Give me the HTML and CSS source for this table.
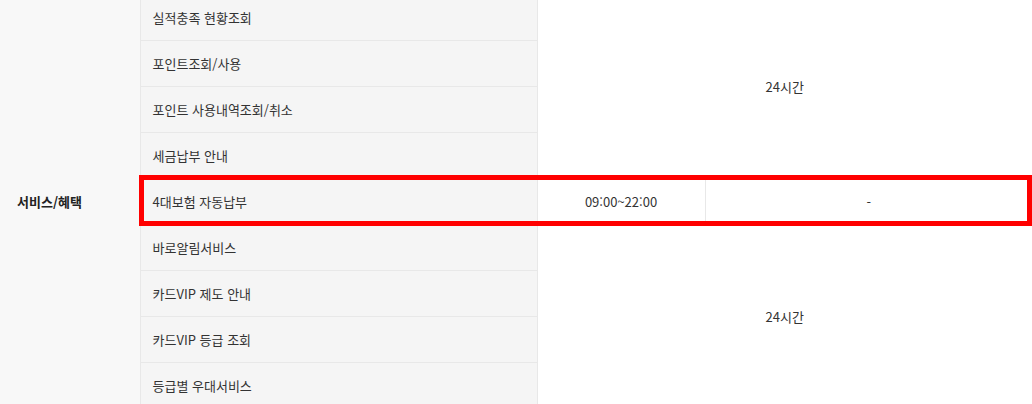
FILE: index.html
```html
<!DOCTYPE html>
<html lang="ko">
<head>
<meta charset="utf-8">
<link rel="stylesheet" href="styles.css">
</head>
<body>
<div class="page">
  <table class="svc">
    <colgroup>
      <col class="c1"><col class="c2"><col class="c3"><col class="c4">
    </colgroup>
    <tbody>
      <tr>
        <th rowspan="9" class="cat">서비스/혜택</th>
        <td class="item">실적충족 현황조회</td>
        <td class="time" colspan="2" rowspan="4">24시간</td>
      </tr>
      <tr><td class="item">포인트조회/사용</td></tr>
      <tr><td class="item">포인트 사용내역조회/취소</td></tr>
      <tr><td class="item">세금납부 안내</td></tr>
      <tr class="hl">
        <td class="item">4대보험 자동납부</td>
        <td class="time split">09:00~22:00</td>
        <td class="time last">-</td>
      </tr>
      <tr>
        <td class="item">바로알림서비스</td>
        <td class="time" colspan="2" rowspan="4">24시간</td>
      </tr>
      <tr><td class="item">카드VIP 제도 안내</td></tr>
      <tr><td class="item">카드VIP 등급 조회</td></tr>
      <tr><td class="item">등급별 우대서비스</td></tr>
    </tbody>
  </table>
  <div class="mark"></div>
</div>
</body>
</html>
```

FILE: styles.css
```css
html, body {
  margin: 0;
  padding: 0;
  background: #fff;
}
body {
  font-family: "Noto Sans CJK KR", "Malgun Gothic", sans-serif;
  font-size: 13px;
  color: #333;
  overflow: hidden;
}
.page {
  position: relative;
  width: 1032px;
  margin-top: -6px;
}
.svc {
  width: 1032px;
  table-layout: fixed;
  border-collapse: collapse;
}
.c1 { width: 140px; }
.c2 { width: 397px; }
.c3 { width: 168px; }
.c4 { width: 327px; }
.svc th, .svc td {
  padding: 0;
  height: 45px;
  border: 1px solid #e8e8e8;
  vertical-align: middle;
  font-weight: normal;
}
.cat {
  background: #f8f8f8;
  border-left: none !important;
  text-align: left;
  padding-left: 17px !important;
  font-weight: bold !important;
  color: #222;
}
.item {
  background: #f5f5f5;
  padding-left: 12px !important;
  text-align: left;
}
.time {
  background: #fff;
  text-align: center;
  border-right: none !important;
}
.time.split {
  border-right: 1px solid #e8e8e8 !important;
}
.mark {
  position: absolute;
  left: 139px;
  top: 181px;
  width: 893px;
  height: 51px;
  box-sizing: border-box;
  border: 5px solid #ff0000;
}
```
